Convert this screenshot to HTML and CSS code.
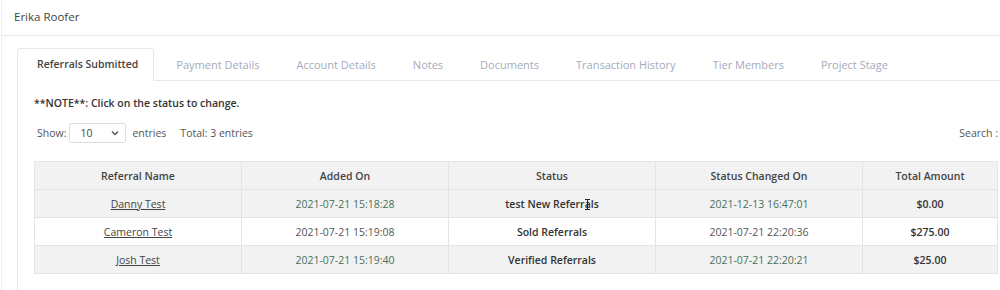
FILE: index.html
```html
<!DOCTYPE html>
<html lang="en">
<head>
<meta charset="utf-8">
<title>Erika Roofer</title>
<link rel="stylesheet" href="styles.css">
</head>
<body>
<div class="panel">
  <div class="panel-head">Erika Roofer</div>
  <div class="panel-body">
    <ul class="tabs">
      <li class="tab active">Referrals Submitted</li>
      <li class="tab">Payment Details</li>
      <li class="tab">Account Details</li>
      <li class="tab">Notes</li>
      <li class="tab">Documents</li>
      <li class="tab">Transaction History</li>
      <li class="tab">Tier Members</li>
      <li class="tab">Project Stage</li>
    </ul>
    <div class="tab-pane">
      <p class="note">**NOTE**: Click on the status to change.</p>
      <div class="toolbar">
        <span class="lbl">Show:</span>
        <span class="select">10
          <svg class="chev" width="8" height="6" viewBox="0 0 8 6"><path d="M1 1.5 L4 4.5 L7 1.5" fill="none" stroke="#555" stroke-width="1.4"/></svg>
        </span>
        <span class="lbl">entries</span>
        <span class="lbl total">Total: 3 entries</span>
        <span class="search">
          <span class="lbl">Search :</span>
          <span class="search-input"></span>
        </span>
      </div>
      <table class="grid">
        <thead>
          <tr><th>Referral Name</th><th>Added On</th><th>Status</th><th>Status Changed On</th><th>Total Amount</th></tr>
        </thead>
        <tbody>
          <tr class="odd">
            <td><a class="name">Danny Test</a></td>
            <td class="date">2021-07-21 15:18:28</td>
            <td class="status"><span class="cursor-wrap">test New Referrals<svg class="ibeam" width="7" height="11" viewBox="0 0 7 11"><path d="M1 0.5 H6 M3.5 0.5 V10.5 M1 10.5 H6" fill="none" stroke="#222" stroke-width="1"/></svg></span></td>
            <td class="date">2021-12-13 16:47:01</td>
            <td class="amt">$0.00</td>
          </tr>
          <tr>
            <td><a class="name">Cameron Test</a></td>
            <td class="date plain">2021-07-21 15:19:08</td>
            <td class="status">Sold Referrals</td>
            <td class="date plain">2021-07-21 22:20:36</td>
            <td class="amt">$275.00</td>
          </tr>
          <tr class="odd">
            <td><a class="name">Josh Test</a></td>
            <td class="date">2021-07-21 15:19:40</td>
            <td class="status">Verified Referrals</td>
            <td class="date">2021-07-21 22:20:21</td>
            <td class="amt">$25.00</td>
          </tr>
        </tbody>
      </table>
    </div>
  </div>
</div>
</body>
</html>
```
FILE: styles.css
```css
* { box-sizing: border-box; }
html, body {
  margin: 0;
  padding: 0;
  background: #fff;
  width: 1000px;
  height: 290px;
  overflow: hidden;
}
body {
  font-family: "Open Sans", "Noto Sans", sans-serif;
  font-size: 10.5px;
  color: #555;
}
.panel {
  margin-left: 1px;
  border-left: 1px solid #eeeeee;
  height: 290px;
}
.panel-head {
  height: 36px;
  padding: 9px 0 0 12px;
  font-size: 11.5px;
  line-height: 15px;
  color: #444;
  border-bottom: 1px solid #e9e9e9;
}
.panel-body {
  padding: 12px 0 0 15px;
}
.tabs {
  list-style: none;
  margin: 0;
  padding: 0;
  display: flex;
  border-bottom: 1px solid #e8e8e8;
  height: 33px;
}
.tab {
  height: 33px;
  padding: 0 17px;
  margin-right: 1px;
  line-height: 31px;
  border: 1px solid transparent;
  border-radius: 4px 4px 0 0;
  color: #a4abbd;
  font-size: 11px;
  white-space: nowrap;
}
.tab.active {
  color: #444;
  font-weight: 600;
  font-size: 10.5px;
  padding: 0 15px 0 19px;
  margin-right: 4px;
  border-color: #e8e8e8;
  border-bottom-color: #fff;
  background: #fff;
}
.tab-pane {
  border-left: 1px solid #e8e8e8;
  padding: 0 0 0 16px;
  height: 220px;
}
.note {
  margin: 0;
  padding-top: 14px;
  line-height: 16px;
  font-weight: 600;
  color: #333;
}
.toolbar {
  display: flex;
  align-items: center;
  margin-top: 12px;
  height: 20px;
  width: 964px;
  padding-left: 3px;
}
.lbl {
  color: #555;
  white-space: nowrap;
}
.select {
  display: flex;
  align-items: center;
  justify-content: space-between;
  width: 57px;
  height: 20px;
  margin: 0 6px 0 3px;
  padding: 0 6px 0 10px;
  border: 1px solid #dddddd;
  border-radius: 2px;
  color: #444;
}
.total { margin-left: 14px; }
.search {
  margin-left: auto;
  margin-right: -158px;
  display: flex;
  align-items: center;
}
.search-input {
  width: 155px;
  height: 21px;
  margin-left: 3px;
  border: 1px solid #dddddd;
}
.grid {
  margin-top: 18px;
  width: 964px;
  border-collapse: collapse;
  table-layout: fixed;
}
.grid th, .grid td {
  height: 28px;
  padding: 0 6px;
  text-align: center;
  border: 1px solid #e4e4e4;
  white-space: nowrap;
}
.grid th:nth-child(-n+4), .grid td:nth-child(-n+4) { width: 207px; }
.grid th {
  background: #f2f2f3;
  font-weight: 600;
  color: #444;
}
.grid tr.odd td { background: #f2f2f2; }
.name {
  color: #444;
  text-decoration: underline;
}
.date { color: #47705b; }
.date.plain { color: #555; }
.status { font-weight: 600; color: #333; }
.amt { font-weight: 600; color: #333; }
.cursor-wrap { position: relative; }
.ibeam {
  position: absolute;
  left: 79px;
  top: 2px;
}
```
